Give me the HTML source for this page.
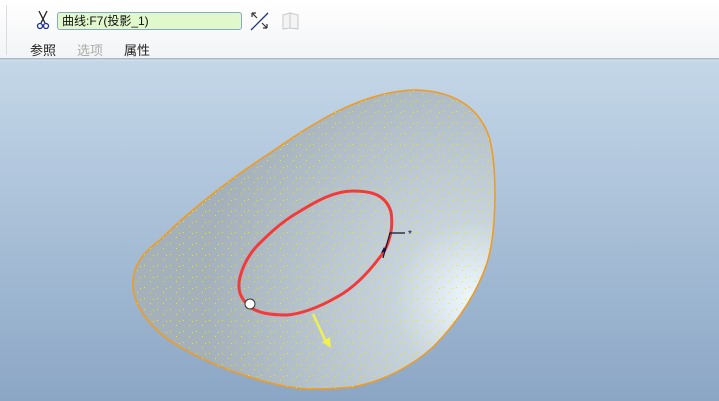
<!DOCTYPE html>
<html><head><meta charset="utf-8"><style>
body{margin:0;width:719px;height:401px;overflow:hidden;font-family:"Liberation Sans","Noto Sans CJK SC",sans-serif;}
#tb{position:absolute;left:0;top:0;width:719px;height:58px;background:linear-gradient(#ffffff,#f3f4f6);}
#ln{position:absolute;left:0;top:58px;width:719px;height:3px;background:linear-gradient(#9fb2c6,#dfe7ef);}
#vp{position:absolute;left:0;top:61px;width:719px;height:340px;background:linear-gradient(#c4d7e8,#8ba6c5);}
#inp{position:absolute;left:57px;top:12px;width:179px;height:16px;border:1px solid #8aa8c0;border-radius:3px;background:#e0f8cc;font-size:12px;line-height:16px;padding-left:4px;color:#111;box-sizing:content-box}
.tab{position:absolute;top:40px;font-size:13px;color:#222}
</style></head><body>
<div id="tb"></div>
<div style="position:absolute;left:6px;top:5px;width:1px;height:50px;background:#d8dde2"></div>
<svg style="position:absolute;left:36px;top:10px" width="14" height="20"><path d="M3 1L9 13M11 1L5 13" stroke="#222" stroke-width="1.3"/><circle cx="4" cy="16" r="2.5" fill="none" stroke="#1a2fa0" stroke-width="1.3"/><circle cx="10" cy="16" r="2.5" fill="none" stroke="#1a2fa0" stroke-width="1.3"/></svg>
<div id="inp">曲线:F7(投影_1)</div>
<svg style="position:absolute;left:250px;top:11px" width="20" height="20"><path d="M1 19L18 2" stroke="#1a2f90" stroke-width="1.3"/><path d="M2 2L7 7M2 2v4M2 2h4M17 17L12 12M17 17v-4M17 17h-4" stroke="#333" stroke-width="1.2" fill="none"/></svg>
<svg style="position:absolute;left:281px;top:11px" width="20" height="20"><path d="M2 4L9 2v15L2 18zM9 2l8 2v14l-8-1z" fill="#f4f4f4" stroke="#c8c8c8"/></svg>
<div class="tab" style="left:30px">参照</div>
<div class="tab" style="left:77px;color:#aaa">选项</div>
<div class="tab" style="left:124px">属性</div>
<div id="ln"></div>
<div id="vp"></div>
<svg style="position:absolute;left:0;top:0" width="719" height="401">
<defs>
<radialGradient id="g" cx="475" cy="300" r="270" gradientUnits="userSpaceOnUse">
<stop offset="0" stop-color="#eef8ff"/><stop offset="0.3" stop-color="#c7d3dc"/><stop offset="1" stop-color="#a4b1bb"/></radialGradient>
<pattern id="dots" width="13" height="11" patternUnits="userSpaceOnUse"><rect x="1" y="1" width="1" height="1" fill="#f0ea00"/><rect x="7" y="6" width="1" height="1" fill="#f0ea00"/><rect x="10" y="2" width="1" height="1" fill="#f0ea00"/></pattern>
<path id="sp" d="M413 90C450 90 480 105 490 140C497 170 497 230 487 263C478 290 460 320 433 347C410 368 380 382 353 387C330 389 310 390 297 388C270 385 220 370 180 347C155 333 135 310 133 287C132 268 140 255 160 240C185 215 225 182 270 153C310 125 360 92 413 90Z"/>
</defs>
<use href="#sp" fill="url(#g)" stroke="#f39a1a" stroke-width="1.5"/>
<use href="#sp" fill="url(#dots)"/>
<path d="M353 191C372 191 386 195 391 212C394 230 388 248 380 257C365 277 350 290 337 297C318 308 300 314 287 315C270 315 258 313 250 307C240 298 237 290 240 277C244 262 252 250 262 241C275 228 285 220 297 213C318 200 335 191 353 191Z" fill="none" stroke="#f23a3a" stroke-width="3"/>
<circle cx="250" cy="304" r="5" fill="#fff" stroke="#333" stroke-width="1"/>
<path d="M313 314L326 342" stroke="#f0f050" stroke-width="2.5"/><path d="M322 342L331 348L330 337Z" fill="#f0f050"/>
<path d="M383 258L390 233H405" stroke="#111433" stroke-width="1.2" fill="none"/>
<path d="M381 253l3 -6l2 4z" fill="#111433"/>
<text x="408" y="237" font-size="10" fill="#111433">*</text>
</svg>
</body></html>
